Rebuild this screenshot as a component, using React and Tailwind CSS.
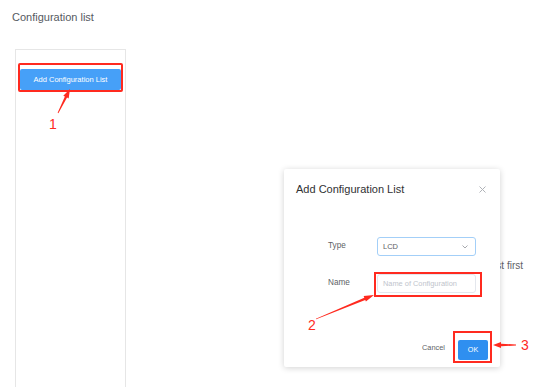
import React from "react";

function arrowPoints(tail, tip, headLen, headW, w0, w1) {
  const dx = tip[0] - tail[0];
  const dy = tip[1] - tail[1];
  const len = Math.hypot(dx, dy);
  const ux = dx / len, uy = dy / len;
  const nx = -uy, ny = ux;
  const bx = tip[0] - ux * headLen, by = tip[1] - uy * headLen;
  const p = [
    [tail[0] + nx * w0 / 2, tail[1] + ny * w0 / 2],
    [bx + nx * w1 / 2, by + ny * w1 / 2],
    [bx + nx * headW / 2, by + ny * headW / 2],
    [tip[0], tip[1]],
    [bx - nx * headW / 2, by - ny * headW / 2],
    [bx - nx * w1 / 2, by - ny * w1 / 2],
    [tail[0] - nx * w0 / 2, tail[1] - ny * w0 / 2],
  ];
  return p.map((q) => q.map((v) => v.toFixed(2)).join(",")).join(" ");
}

export default function App() {
  return (
    <div className="relative w-[559px] h-[387px] overflow-hidden bg-white font-['Liberation_Sans',Arial,sans-serif]">
      <div className="pl-[12px] pt-[11px] text-[11px] leading-[13px] text-[#555a61]">Configuration list</div>
      <div className="flex mt-[25px] pl-[15px]">
        <div className="w-[111px] h-[400px] border border-[#e6e6e6] pt-[15px] pl-[4px]">
          <div className="relative w-[101px]">
            <button className="w-[101px] h-[21px] rounded-[2px] bg-[#46a0f8] text-white text-[7.5px] leading-[21px] text-center">
              Add Configuration List
            </button>
            <div className="absolute -left-[2px] -top-[2px] -right-[2px] -bottom-[2px] border-2 border-[#ff2a1f] rounded-[2px]" />
          </div>
        </div>
        <div className="flex-1 pt-[211px] pr-[36px] text-right text-[10px] leading-[12px] text-[#606266]">
          Please add configuration list first
        </div>
      </div>

      {/* Dialog */}
      <div className="absolute left-[284px] top-[169px] w-[216px] h-[198px] bg-white rounded-[2px] shadow-[0_1px_6px_rgba(0,0,0,0.18)] flex flex-col">
        <div className="flex items-center justify-between pt-[13px] pl-[12px] pr-[14px]">
          <span className="text-[11px] leading-[14px] text-[#303133]">Add Configuration List</span>
          <svg width="7" height="7" viewBox="0 0 7 7" className="block">
            <path d="M0.5 0.5L6.5 6.5M6.5 0.5L0.5 6.5" stroke="#b0b3b8" strokeWidth="1" />
          </svg>
        </div>
        <div className="pt-[41px] pl-[44px] flex flex-col gap-[18px]">
          <div className="flex items-center h-[19px]">
            <span className="w-[49px] text-[8.2px] text-[#606266]">Type</span>
            <div className="w-[99px] h-[19px] border border-[#a3cff8] rounded-[3px] flex items-center justify-between pl-[5px] pr-[7px]">
              <span className="text-[7.5px] text-[#606266]">LCD</span>
              <svg width="6" height="4" viewBox="0 0 6 4" className="block">
                <path d="M0.5 0.5L3 3L5.5 0.5" fill="none" stroke="#909399" strokeWidth="0.8" />
              </svg>
            </div>
          </div>
          <div className="flex items-center h-[19px]">
            <span className="w-[49px] text-[8.2px] text-[#606266]">Name</span>
            <div className="relative">
              <div className="w-[99px] h-[19px] border border-[#e4e7ed] rounded-[3px] flex items-center pl-[5px]">
                <span className="text-[7.4px] text-[#c0c4cc]">Name of Configuration</span>
              </div>
              <div className="absolute -left-[3px] -top-[2px] -right-[6px] -bottom-[4px] border-2 border-[#ff2a1f]" />
            </div>
          </div>
        </div>
        <div className="mt-[42px] flex items-center justify-end pr-[12px] gap-[13px]">
          <span className="text-[7.4px] text-[#606266]">Cancel</span>
          <div className="relative">
            <button className="w-[30px] h-[20px] rounded-[2px] bg-[#2f8ff0] text-white text-[7.2px] leading-[20px] text-center">OK</button>
            <div className="absolute -left-[5px] -top-[4px] -right-[4px] -bottom-[3px] border-2 border-[#ff2a1f]" />
          </div>
        </div>
      </div>

      {/* Annotations */}
      <svg className="absolute left-0 top-0 pointer-events-none" width="559" height="387">
        <polygon points={arrowPoints([58, 113], [70, 89], 9, 6, 0.8, 2.4)} fill="#ff2a1f" />
        <polygon points={arrowPoints([316, 319], [374, 295], 10, 6, 0.8, 2.4)} fill="#ff2a1f" />
        <polygon points={arrowPoints([516, 345], [493, 345], 8, 6, 1.2, 2.4)} fill="#ff2a1f" />
      </svg>
      <span className="absolute left-[49px] top-[116px] text-[14px] leading-[16px] text-[#ff2a1f]">1</span>
      <span className="absolute left-[308px] top-[317px] text-[14px] leading-[16px] text-[#ff2a1f]">2</span>
      <span className="absolute left-[521px] top-[337px] text-[14px] leading-[16px] text-[#ff2a1f]">3</span>
    </div>
  );
}
